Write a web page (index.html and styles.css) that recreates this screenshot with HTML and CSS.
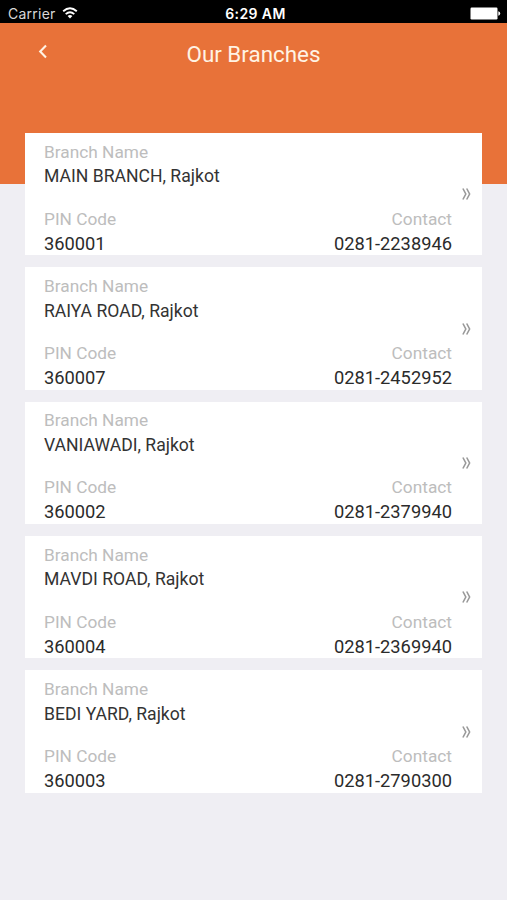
FILE: index.html
```html
<!DOCTYPE html>
<html lang="en">

<head>
  <meta charset="UTF-8" />
  <meta name="viewport" content="width=device-width, initial-scale=1" />
  <title>Our Branches</title>
  <link rel="stylesheet" href="styles.css">
</head>

<body>
  <!-- Phone status bar -->
  <div class="status-bar">
    <div class="carrier">
      <span>Carrier</span>
      <svg class="wifi" width="16" height="12" viewBox="0 0 16 12">
        <path d="M1.2 4.3 Q8 -1.6 14.8 4.3" fill="none" stroke="#fff" stroke-width="1.9" />
        <path d="M3.7 7.1 Q8 3.4 12.3 7.1" fill="none" stroke="#fff" stroke-width="1.9" />
        <path d="M5.6 8.9 Q8 7.1 10.4 8.9 L8 11.4 Z" fill="#fff" />
      </svg>
    </div>
    <span class="time">6:29 AM</span>
    <div class="battery">
      <svg width="31" height="13" viewBox="0 0 31 13">
        <rect x="0.5" y="0.5" width="27" height="12" rx="1.2" fill="#fff" />
        <path d="M28.3 4.3 Q30.2 4.8 30.2 6.5 Q30.2 8.2 28.3 8.7 Z" fill="#fff" />
      </svg>
    </div>
  </div>

  <header class="header">
    <a class="back" href="#" aria-label="Back">
      <svg width="10" height="15" viewBox="0 0 10 15">
        <path d="M8 1.6 L2.2 7.5 L8 13.4" fill="none" stroke="#fff3e4" stroke-width="2.1" />
      </svg>
    </a>
    <h1>Our Branches</h1>
  </header>

  <main class="branch-list">
    <div class="branch-card">
      <div class="info">
        <p class="label">Branch Name</p>
        <p class="name">MAIN BRANCH, Rajkot</p>
        <div class="details">
          <div>
            <p class="label">PIN Code</p>
            <p class="number">360001</p>
          </div>
          <div class="contact">
            <p class="label">Contact</p>
            <p class="number">0281-2238946</p>
          </div>
        </div>
      </div>
      <svg class="more" width="9" height="12" viewBox="0 0 9 12">
        <path d="M0.9 0.5 L3.8 6 L0.9 11.5 M4.7 0.5 L7.6 6 L4.7 11.5" />
      </svg>
    </div>

    <div class="branch-card">
      <div class="info">
        <p class="label">Branch Name</p>
        <p class="name">RAIYA ROAD, Rajkot</p>
        <div class="details">
          <div>
            <p class="label">PIN Code</p>
            <p class="number">360007</p>
          </div>
          <div class="contact">
            <p class="label">Contact</p>
            <p class="number">0281-2452952</p>
          </div>
        </div>
      </div>
      <svg class="more" width="9" height="12" viewBox="0 0 9 12">
        <path d="M0.9 0.5 L3.8 6 L0.9 11.5 M4.7 0.5 L7.6 6 L4.7 11.5" />
      </svg>
    </div>

    <div class="branch-card">
      <div class="info">
        <p class="label">Branch Name</p>
        <p class="name">VANIAWADI, Rajkot</p>
        <div class="details">
          <div>
            <p class="label">PIN Code</p>
            <p class="number">360002</p>
          </div>
          <div class="contact">
            <p class="label">Contact</p>
            <p class="number">0281-2379940</p>
          </div>
        </div>
      </div>
      <svg class="more" width="9" height="12" viewBox="0 0 9 12">
        <path d="M0.9 0.5 L3.8 6 L0.9 11.5 M4.7 0.5 L7.6 6 L4.7 11.5" />
      </svg>
    </div>

    <div class="branch-card">
      <div class="info">
        <p class="label">Branch Name</p>
        <p class="name">MAVDI ROAD, Rajkot</p>
        <div class="details">
          <div>
            <p class="label">PIN Code</p>
            <p class="number">360004</p>
          </div>
          <div class="contact">
            <p class="label">Contact</p>
            <p class="number">0281-2369940</p>
          </div>
        </div>
      </div>
      <svg class="more" width="9" height="12" viewBox="0 0 9 12">
        <path d="M0.9 0.5 L3.8 6 L0.9 11.5 M4.7 0.5 L7.6 6 L4.7 11.5" />
      </svg>
    </div>

    <div class="branch-card">
      <div class="info">
        <p class="label">Branch Name</p>
        <p class="name">BEDI YARD, Rajkot</p>
        <div class="details">
          <div>
            <p class="label">PIN Code</p>
            <p class="number">360003</p>
          </div>
          <div class="contact">
            <p class="label">Contact</p>
            <p class="number">0281-2790300</p>
          </div>
        </div>
      </div>
      <svg class="more" width="9" height="12" viewBox="0 0 9 12">
        <path d="M0.9 0.5 L3.8 6 L0.9 11.5 M4.7 0.5 L7.6 6 L4.7 11.5" />
      </svg>
    </div>
  </main>
</body>

</html>
```
FILE: styles.css
```css
* {
  margin: 0;
  padding: 0;
  box-sizing: border-box;
}

body {
  background: #efeef3;
  font-family: Roboto, sans-serif;
  min-height: 100vh;
}

/* Status bar */
.status-bar {
  display: grid;
  grid-template-columns: 1fr auto 1fr;
  align-items: center;
  height: 23px;
  padding: 4px 6px 0 8px;
  background: #000;
  color: #fff;
  font-family: Inter, sans-serif;
  font-size: 14px;
  line-height: 19px;
}

.carrier {
  display: flex;
  align-items: center;
  gap: 6px;
  color: #d8d8d8;
  letter-spacing: 0.25px;
}

.wifi {
  margin-top: -2px;
}

.time {
  padding-left: 2px;
  font-weight: 600;
  letter-spacing: 0.4px;
}

.battery {
  display: flex;
  justify-content: flex-end;
}

/* Orange header, the first card overlaps its lower part */
.header {
  display: grid;
  grid-template-columns: 1fr auto 1fr;
  align-items: start;
  height: 161px;
  padding: 17px 0 0;
  background: #e87239;
}

.back {
  display: flex;
  padding: 4px 0 0 38px;
}

.header h1 {
  color: #fff3e4;
  font-size: 22.4px;
  font-weight: 400;
  line-height: 28px;
}

.branch-list {
  display: flex;
  flex-direction: column;
  gap: 12px;
  margin-top: -51px;
  padding: 0 25px;
}

.branch-card {
  display: flex;
  align-items: center;
  height: 122.35px;
  padding: 0 11.5px 0 19px;
  background: #fff;
}

.info {
  flex: 1;
  padding-top: 7px;
}

.label {
  color: #bdbdbd;
  font-size: 17.3px;
  line-height: 24px;
}

.name {
  padding-top: 0.8px;
  color: #333;
  font-size: 17.6px;
  line-height: 24px;
}

.details {
  display: flex;
  justify-content: space-between;
  margin-top: 18.3px;
  padding-right: 9.5px;
}

.contact {
  text-align: right;
}

.number {
  color: #2b2b2b;
  font-size: 18.3px;
  line-height: 25px;
}

.more {
  fill: none;
  stroke: #999;
  stroke-width: 1.6;
}
```
